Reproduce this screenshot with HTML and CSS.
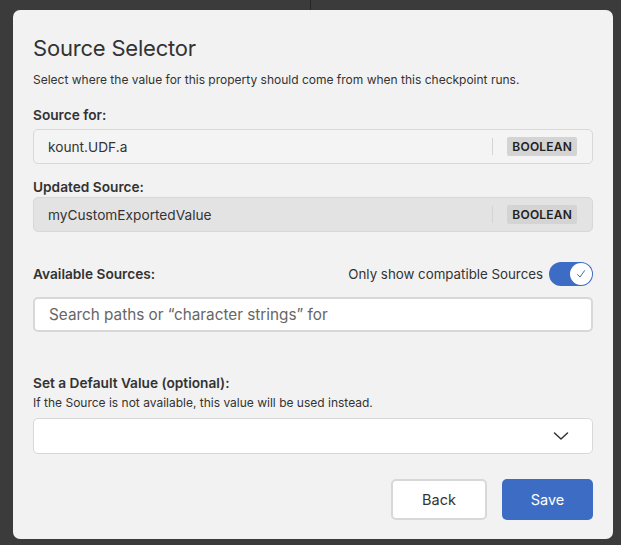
FILE: index.html
```html
<!DOCTYPE html>
<html>
<head>
<meta charset="utf-8">
<link rel="stylesheet" href="styles.css">
</head>
<body>
<div class="dialog">
  <h1 class="title">Source Selector</h1>
  <p class="subtitle">Select where the value for this property should come from when this checkpoint runs.</p>

  <div class="label label-first">Source for:</div>
  <div class="field">
    <span class="field-value">kount.UDF.a</span>
    <span class="divider"></span>
    <span class="badge">BOOLEAN</span>
  </div>

  <div class="label label-second">Updated Source:</div>
  <div class="field field-filled">
    <span class="field-value">myCustomExportedValue</span>
    <span class="divider"></span>
    <span class="badge">BOOLEAN</span>
  </div>

  <div class="avail-row">
    <div class="label">Available Sources:</div>
    <div class="toggle-wrap">
      <span class="toggle-text">Only show compatible Sources</span>
      <span class="toggle">
        <span class="knob">
          <svg width="12" height="12" viewBox="0 0 12 12"><path d="M2.6 6.6 L5 9 L9.6 2.6" fill="none" stroke="#3d6cc4" stroke-width="1" stroke-linecap="round" stroke-linejoin="round"/></svg>
        </span>
      </span>
    </div>
  </div>

  <div class="search">Search paths or “character strings” for</div>

  <div class="label label-default">Set a Default Value (optional):</div>
  <p class="helper">If the Source is not available, this value will be used instead.</p>
  <div class="select">
    <svg width="16" height="10" viewBox="0 0 16 10"><path d="M1.5 2 L8 8 L14.5 2" fill="none" stroke="#333" stroke-width="1.5" stroke-linecap="round" stroke-linejoin="round"/></svg>
  </div>

  <div class="actions">
    <button class="btn btn-back">Back</button>
    <button class="btn btn-save">Save</button>
  </div>
</div>
</body>
</html>
```

FILE: styles.css
```css
html, body {
  margin: 0;
  padding: 0;
}
body {
  width: 621px;
  height: 545px;
  overflow: hidden;
  background:
    linear-gradient(to right, transparent 310px, #262626 310px, #262626 311px, transparent 311px) top left / 100% 10px no-repeat,
    #3b3b3b;
  font-family: Inter, "Noto Sans", sans-serif;
  color: #333;
}
.dialog {
  box-sizing: border-box;
  margin: 10px 0 0 13px;
  width: 600px;
  height: 529px;
  background: #f2f2f2;
  border-radius: 7px;
  padding: 24px 20px 0 20px;
  display: flex;
  flex-direction: column;
}
.title {
  margin: 0;
  font-size: 22px;
  font-weight: 400;
  line-height: 28px;
  color: #333;
  letter-spacing: -0.2px;
}
.subtitle {
  margin: 10px 0 0 0;
  font-size: 12px;
  line-height: 15px;
  color: #333;
}
.label {
  font-size: 13.7px;
  font-weight: 600;
  line-height: 16px;
  color: #333;
}
.label-first { margin-top: 20px; }
.label-second { margin-top: 15px; }
.field {
  box-sizing: border-box;
  margin-top: 6px;
  height: 35px;
  border: 1px solid #d8d8d8;
  border-radius: 5px;
  display: flex;
  align-items: center;
  padding: 0 15px 0 14px;
  background: #f4f4f4;
}
.field-filled {
  background: #e3e3e3;
  height: 35px;
  margin-top: 2px;
}
.field-value {
  flex: 1;
  font-size: 13.7px;
  color: #333;
}
.divider {
  width: 1px;
  height: 17px;
  background: #d4d4d4;
  margin-right: 14px;
}
.badge {
  background: #d4d4d4;
  font-size: 12px;
  font-weight: 600;
  letter-spacing: 0.2px;
  padding: 0 5px;
  height: 19px;
  line-height: 19px;
  border-radius: 2px;
  color: #222;
}
.avail-row {
  margin-top: 30px;
  display: flex;
  align-items: center;
  justify-content: space-between;
}
.toggle-wrap {
  display: flex;
  align-items: center;
  gap: 6px;
}
.toggle-text {
  font-size: 13.3px;
  color: #333;
}
.toggle {
  box-sizing: border-box;
  width: 44px;
  height: 24px;
  border-radius: 12px;
  background: #3d6cc4;
  display: flex;
  align-items: center;
  justify-content: flex-end;
  padding-right: 1px;
}
.knob {
  width: 22px;
  height: 22px;
  border-radius: 50%;
  background: #fff;
  display: flex;
  align-items: center;
  justify-content: center;
}
.search {
  box-sizing: border-box;
  margin-top: 11px;
  height: 35px;
  border: 2px solid #d8d8d8;
  border-radius: 5px;
  background: #fff;
  font-size: 15.3px;
  color: #666;
  display: flex;
  align-items: center;
  padding-left: 14px;
}
.label-default { margin-top: 43px; }
.helper {
  margin: 5px 0 0 0;
  font-size: 12px;
  line-height: 14px;
  color: #333;
}
.select {
  box-sizing: border-box;
  margin-top: 8px;
  height: 36px;
  border: 1px solid #d8d8d8;
  border-radius: 5px;
  background: #fff;
  display: flex;
  align-items: center;
  justify-content: flex-end;
  padding-right: 23px;
}
.actions {
  margin-top: 25px;
  display: flex;
  justify-content: flex-end;
  gap: 15px;
}
.btn {
  box-sizing: border-box;
  height: 41px;
  border-radius: 5px;
  font-family: inherit;
  font-size: 14.5px;
  cursor: pointer;
}
.btn-back {
  width: 96px;
  background: #fff;
  border: 2px solid #d8d8d8;
  color: #333;
}
.btn-save {
  width: 91px;
  background: #3d6cc4;
  border: none;
  color: #fff;
}
```
